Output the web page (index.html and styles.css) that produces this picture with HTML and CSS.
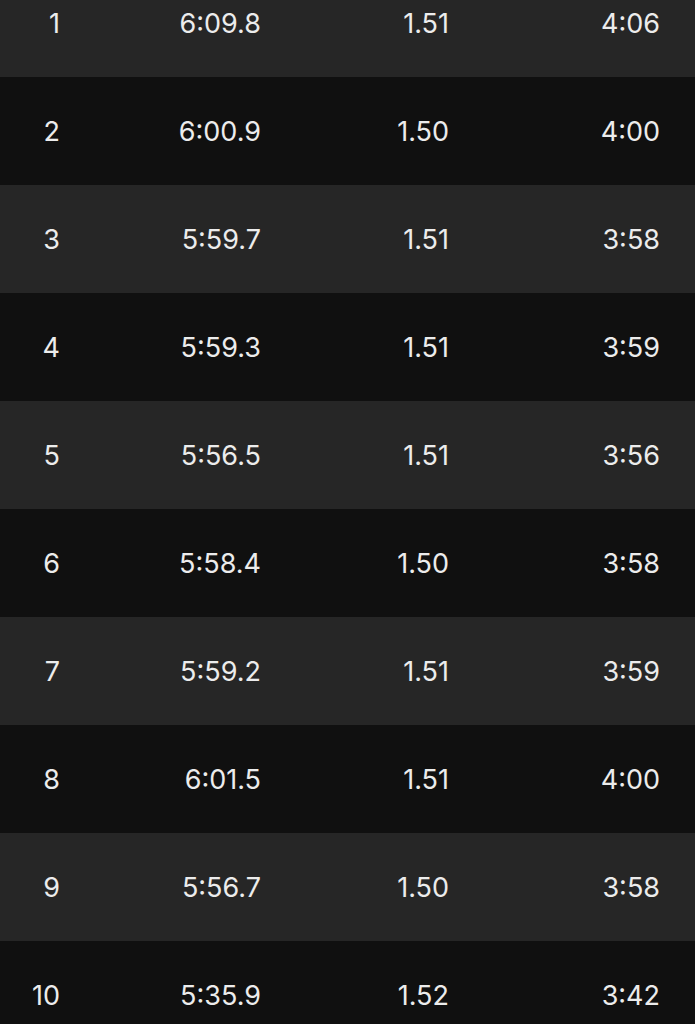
FILE: index.html
```html
<!DOCTYPE html>
<html>
<head>
<meta charset="utf-8">
<link rel="stylesheet" href="styles.css">
</head>
<body>
<div class="table">
  <div class="row light"><span>1</span><span>6:09.8</span><span>1.51</span><span>4:06</span></div>
  <div class="row dark"><span>2</span><span>6:00.9</span><span>1.50</span><span>4:00</span></div>
  <div class="row light"><span>3</span><span>5:59.7</span><span>1.51</span><span>3:58</span></div>
  <div class="row dark"><span>4</span><span>5:59.3</span><span>1.51</span><span>3:59</span></div>
  <div class="row light"><span>5</span><span>5:56.5</span><span>1.51</span><span>3:56</span></div>
  <div class="row dark"><span>6</span><span>5:58.4</span><span>1.50</span><span>3:58</span></div>
  <div class="row light"><span>7</span><span>5:59.2</span><span>1.51</span><span>3:59</span></div>
  <div class="row dark"><span>8</span><span>6:01.5</span><span>1.51</span><span>4:00</span></div>
  <div class="row light"><span>9</span><span>5:56.7</span><span>1.50</span><span>3:58</span></div>
  <div class="row dark"><span>10</span><span>5:35.9</span><span>1.52</span><span>3:42</span></div>
</div>
</body>
</html>
```
FILE: styles.css
```css
html, body {
  margin: 0;
  padding: 0;
  background: #101010;
  overflow: hidden;
}
.table {
  margin-top: -31px;
  font-family: Inter, "Noto Sans", sans-serif;
  font-size: 27px;
  color: #ececec;
}
.row {
  height: 108px;
  display: grid;
  grid-template-columns: 60px 201px 188px 211px;
  align-items: center;
}
.row span {
  text-align: right;
}
.light { background: #262626; }
.dark { background: #101010; }
```
